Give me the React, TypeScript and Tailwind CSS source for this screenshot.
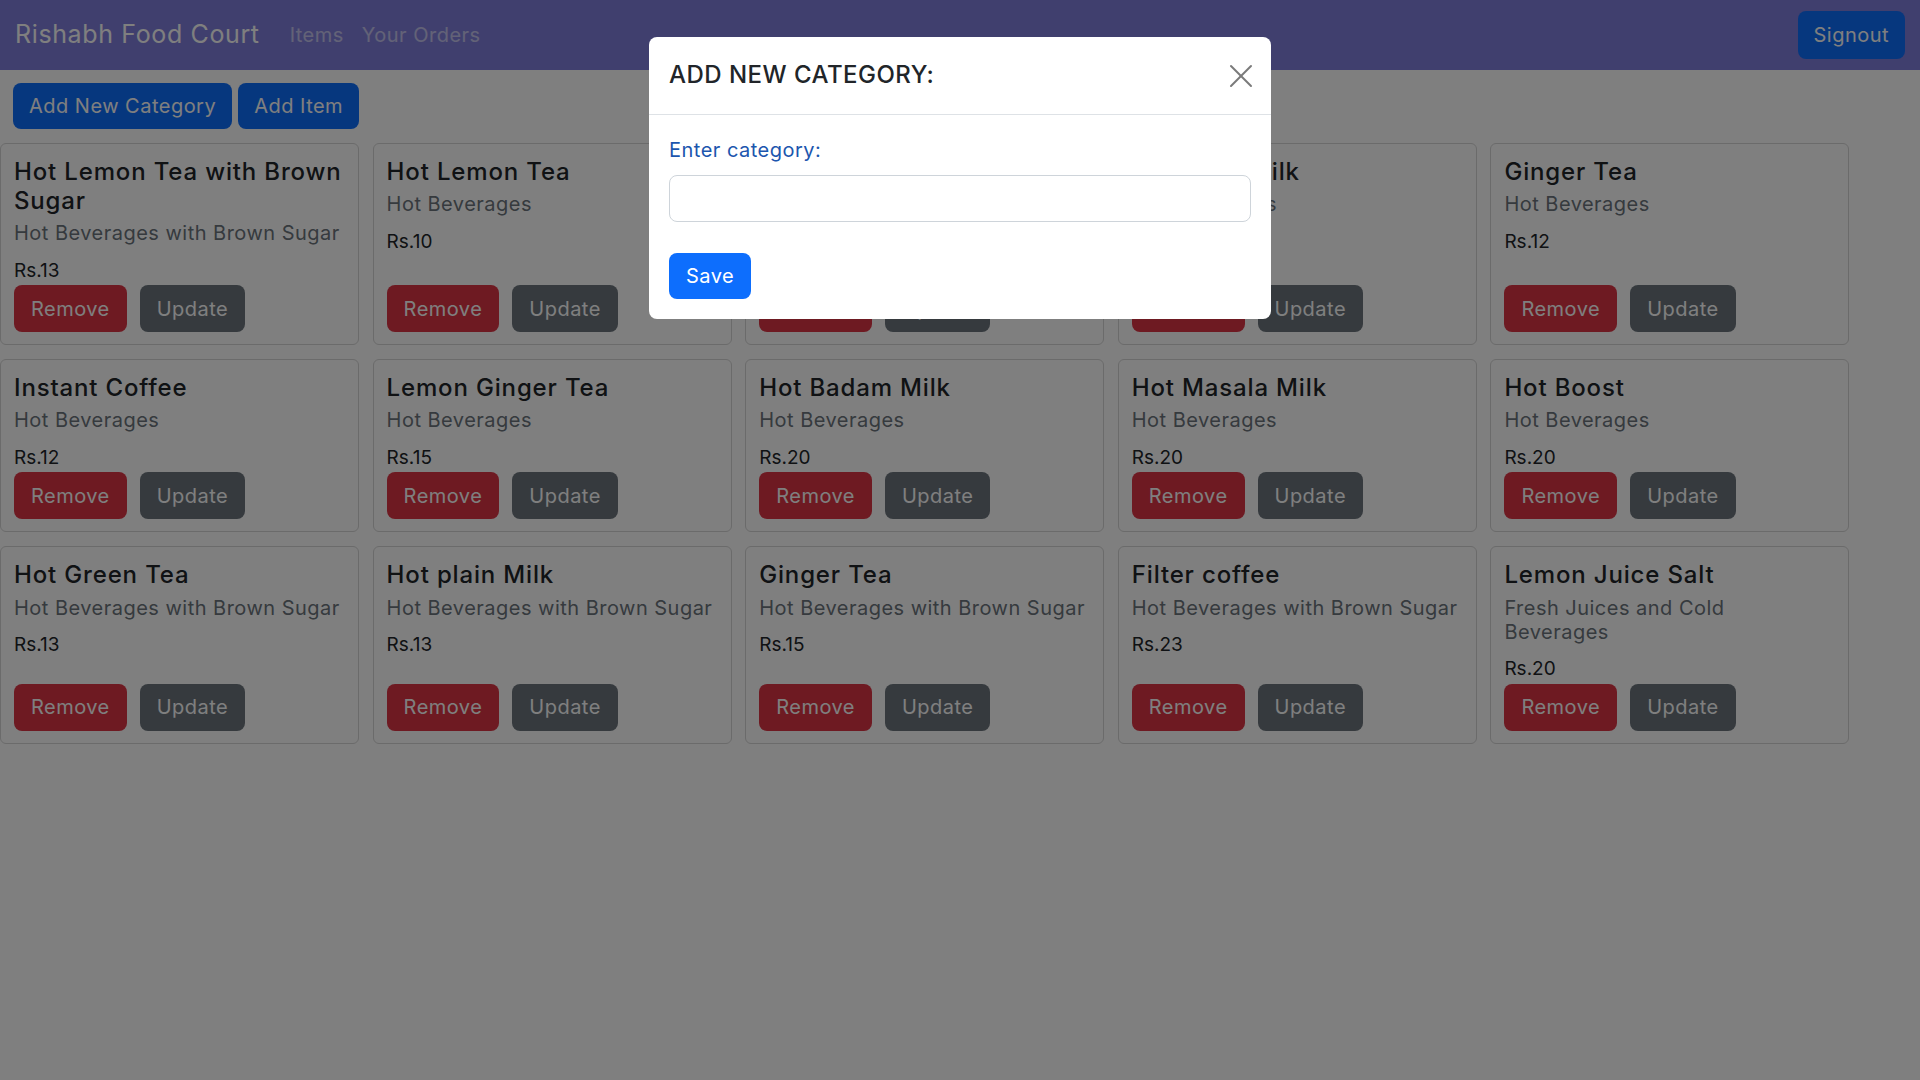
import { X } from "lucide-react";

type Item = { name: string; category: string; price: number };

// articles du menu, dans l'ordre de la grille
const ITEMS: Item[] = [
  { name: "Hot Lemon Tea with Brown Sugar", category: "Hot Beverages with Brown Sugar", price: 13 },
  { name: "Hot Lemon Tea", category: "Hot Beverages", price: 10 },
  { name: "Hot Ginger Tea", category: "Hot Beverages", price: 12 },
  { name: "Hot Plain Milk", category: "Hot Beverages", price: 15 },
  { name: "Ginger Tea", category: "Hot Beverages", price: 12 },
  { name: "Instant Coffee", category: "Hot Beverages", price: 12 },
  { name: "Lemon Ginger Tea", category: "Hot Beverages", price: 15 },
  { name: "Hot Badam Milk", category: "Hot Beverages", price: 20 },
  { name: "Hot Masala Milk", category: "Hot Beverages", price: 20 },
  { name: "Hot Boost", category: "Hot Beverages", price: 20 },
  { name: "Hot Green Tea", category: "Hot Beverages with Brown Sugar", price: 13 },
  { name: "Hot plain Milk", category: "Hot Beverages with Brown Sugar", price: 13 },
  { name: "Ginger Tea", category: "Hot Beverages with Brown Sugar", price: 15 },
  { name: "Filter coffee", category: "Hot Beverages with Brown Sugar", price: 23 },
  { name: "Lemon Juice Salt", category: "Fresh Juices and Cold Beverages", price: 20 },
];

function ItemCard({ item }: { item: Item }) {
  return (
    <div className="flex flex-col rounded-[6px] border border-[#d6d6d6] bg-white px-[13px] pt-[14px] pb-[12px]">
      <h5 className="text-[24px] leading-[1.2] font-medium tracking-[0.035em] text-[#212529]">{item.name}</h5>
      <h6 className="mt-[5.5px] max-w-[328px] text-[20px] leading-[1.2] text-[#6c757d]">{item.category}</h6>
      <p className="mt-[11.5px] text-[19px] leading-[1.5] tracking-normal text-[#212529]">Rs.{item.price}</p>
      <div className="mt-auto flex gap-[13px]">
        <button className="h-[47px] rounded-[8px] bg-[#dc3545] px-[17px] text-[20px] text-white">Remove</button>
        <button className="h-[47px] rounded-[8px] bg-[#6c757d] px-[17px] text-[20px] text-white">Update</button>
      </div>
    </div>
  );
}

export default function App() {
  return (
    <div className="relative min-h-screen bg-white font-['Inter',sans-serif] tracking-[0.03em]">
      <nav className="flex h-[70px] items-center bg-[#807fdc] pr-[15px] pl-[15px]">
        <a className="text-[25px] tracking-[0.025em] text-white">Rishabh Food Court</a>
        <div className="ml-[30px] flex gap-[18px] text-[20px] text-white/55">
          <a>Items</a>
          <a>Your Orders</a>
        </div>
        <button className="ml-auto h-[48px] rounded-[8px] bg-[#0d6efd] px-4 text-[20px] text-white">Signout</button>
      </nav>

      <div className="flex gap-[6px] pt-[13px] pl-[13px]">
        <button className="h-[46px] rounded-[8px] bg-[#0d6efd] px-4 text-[20px] text-white">Add New Category</button>
        <button className="h-[46px] rounded-[8px] bg-[#0d6efd] px-4 text-[20px] text-white">Add Item</button>
      </div>

      <div className="mt-[14px] grid grid-cols-[repeat(5,359px)] gap-x-[13.6px] gap-y-[14px]">
        {ITEMS.map((it, i) => (
          <ItemCard key={i} item={it} />
        ))}
      </div>

      {/* fond du modal */}
      <div className="fixed inset-0 bg-black/50" />

      <div className="fixed inset-0 flex justify-center">
        <div className="mt-[37px] h-fit w-[622px] rounded-[8px] bg-white">
          <div className="flex h-[78px] items-center justify-between border-b border-[#dee2e6] px-5">
            <h4 className="text-[24px] leading-[1.2] font-medium text-[#212529]">ADD NEW CATEGORY:</h4>
            <button className="-mr-[10px] text-[#7a7a7a]" aria-label="Close">
              <X size={40} strokeWidth={1.2} />
            </button>
          </div>
          <div className="p-5">
            <label className="block text-[20px] leading-[1.5] text-[#1c56ae]">Enter category:</label>
            <input className="mt-[10px] block h-[47px] w-full rounded-[8px] border border-[#ced4da] px-3 text-[20px] outline-none" />
            <button className="mt-[31px] h-[46px] rounded-[8px] bg-[#0d6efd] px-[17px] text-[20px] text-white">Save</button>
          </div>
        </div>
      </div>
    </div>
  );
}
